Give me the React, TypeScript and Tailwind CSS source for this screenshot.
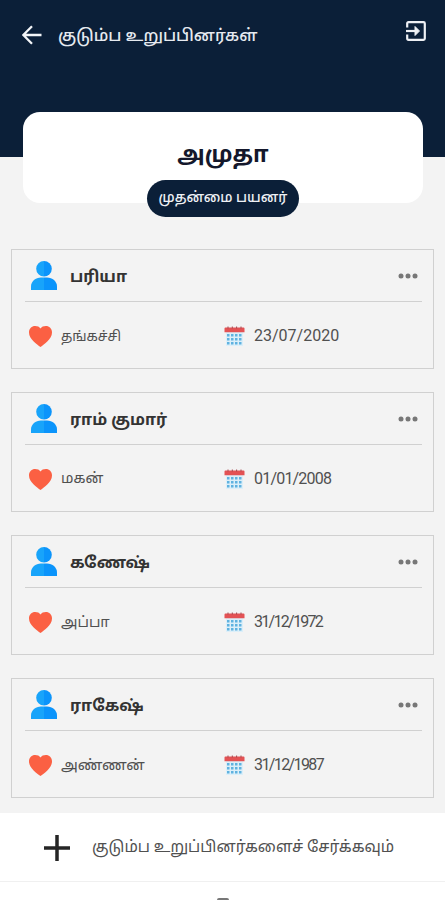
import React from 'react';

const members = [
  { id: 1, name: 'பரியா', relation: 'தங்கச்சி', relationClass: 'text-[13.7px]', dob: '23/07/2020', dobClass: 'tracking-[0px]' },
  { id: 2, name: 'ராம் குமார்', relation: 'மகன்', relationClass: 'text-[14.5px]', dob: '01/01/2008', dobClass: 'tracking-[-0.8px]' },
  { id: 3, name: 'கணேஷ்', relation: 'அப்பா', relationClass: 'text-[14.7px]', dob: '31/12/1972', dobClass: 'tracking-[-1.7px]' },
  { id: 4, name: 'ராகேஷ்', relation: 'அண்ணன்', relationClass: 'text-[15px]', dob: '31/12/1987', dobClass: 'tracking-[-1.6px]' },
];

function PersonIcon() {
  return (
    <svg width="26" height="29" viewBox="0 0 26 29" className="shrink-0">
      <path d="M13 0a7.800 7.800 0 0 0 0 15.600z" fill="#18a4fa" />
      <path d="M13 0a7.800 7.800 0 0 1 0 15.600z" fill="#0b94fb" />
      <path d="M0 29v-3.500c0-5 4.500-8.900 10-8.900h3v12.400z" fill="#18a4fa" />
      <path d="M26 29v-3.500c0-5-4.500-8.900-10-8.900h-3v12.400z" fill="#0b94fb" />
    </svg>
  );
}

function HeartIcon() {
  return (
    <svg width="23" height="21" viewBox="0 0 23 21" className="shrink-0">
      <path d="M11.500 21C8 18.500 0 13 0 6.500C0 2.500 2.800 0 6.100 0C8.500 0 10.500 .8 11.500 2.500C12.500 .8 14.500 0 16.900 0C20.200 0 23 2.500 23 6.500C23 13 15 18.500 11.500 21Z" fill="#fb6043" />
    </svg>
  );
}

function CalendarIcon() {
  const cols = [3, 7, 11, 15];
  const rows = [8, 12, 16];
  return (
    <svg width="21" height="21" viewBox="0 0 21 21" className="shrink-0">
      <path d="M2 6h17v14H2z" fill="#dceff9" />
      <path d="M1.500 1.500h18a1 1 0 0 1 1 1V6.300H.500V2.500a1 1 0 0 1 1-1z" fill="#e35254" />
      <path d="M4 .5v2M8.300 .5v2M12.600 .5v2M17 .5v2" stroke="#a34a50" strokeWidth="1" />
      {rows.map((y) => cols.map((x) => (
        <rect key={`${x}-${y}`} x={x} y={y} width="2.500" height="2.500" fill="#5fb2e0" />
      )))}
    </svg>
  );
}

export default function App() {
  return (
    <div className="w-[445px] h-[900px] overflow-hidden flex flex-col bg-[#f3f3f3] font-['Roboto','Noto_Sans_Tamil','Noto_Sans',sans-serif]">
      <header className="h-[157px] shrink-0 bg-[#0b1f38] flex flex-col">
        <div className="h-[70px] pl-[22px] pr-[19px] flex items-center">
          <svg width="20" height="20" viewBox="0 0 20 20" className="shrink-0" fill="none" stroke="#f3f5f8" strokeWidth="2.300">
            <path d="M19.500 10H1.500M10 1.200L1.300 10L10 18.800" />
          </svg>
          <h1 className="ml-[16px] mt-[2px] text-[16.6px] leading-[28px] font-medium text-[#e6eaf0] whitespace-nowrap">குடும்ப உறுப்பினர்கள்</h1>
          <svg width="20" height="20" viewBox="0 0 20 20" className="ml-auto mb-[9px] shrink-0" fill="none" stroke="#eef0f4" strokeWidth="2.200">
            <path d="M1.200 6.500V2.500Q1.200 1.200 2.500 1.200h15Q18.800 1.200 18.800 2.500v15Q18.800 18.800 17.500 18.800h-15Q1.200 18.800 1.200 17.500v-4" />
            <path d="M0 10h12" />
            <path d="M9 5.500L13.500 10L9 14.500z" fill="#eef0f4" strokeWidth="1" />
          </svg>
        </div>
      </header>

      {/* Primary user card overlaps the bottom of the header */}
      <section className="relative -mt-[45px] ml-[23px] w-[400px] h-[91px] shrink-0 rounded-[17px] bg-white flex justify-center">
        <h2 className="mt-[26px] text-[22.5px] leading-[32px] font-bold text-[#14182c]">அமுதா</h2>
        <div className="absolute left-[124px] top-[68px] w-[152px] h-[37px] rounded-full bg-[#0b1f38] flex items-center justify-center pb-[3px]">
          <span className="text-[13.9px] leading-[24px] font-medium text-[#eef1f5] whitespace-nowrap">முதன்மை பயனர்</span>
        </div>
      </section>

      <main className="mt-[46px] pl-[11px] pr-[11px] flex flex-col gap-[23px] flex-1 min-h-0">
        {members.map((member) => (
          <article key={member.id} className="h-[120px] shrink-0 border border-[#d0d0d0] pl-[13px] pr-[11px]">
            <div className="h-[52px] border-b border-[#d0d0d0] flex items-center pl-[6px] pr-[4px]">
              <PersonIcon />
              <h3 className="ml-[13px] mt-[3px] text-[16px] leading-[26px] font-bold text-[#333] whitespace-nowrap">{member.name}</h3>
              <svg width="20" height="6" viewBox="0 0 20 6" className="ml-auto" fill="#777">
                <circle cx="3" cy="3" r="2.500" />
                <circle cx="10" cy="3" r="2.500" />
                <circle cx="17" cy="3" r="2.500" />
              </svg>
            </div>
            <div className="h-[68px] flex items-center pl-[4px]">
              <div className="w-[195px] flex items-center gap-[9px]">
                <HeartIcon />
                <span className={`leading-[24px] text-[#505050] whitespace-nowrap ${member.relationClass}`}>{member.relation}</span>
              </div>
              <div className="flex items-center gap-[9px]">
                <CalendarIcon />
                <span className={`text-[16px] leading-[24px] text-[#505050] ${member.dobClass}`}>{member.dob}</span>
              </div>
            </div>
          </article>
        ))}
      </main>

      <footer className="h-[87px] shrink-0 bg-white flex flex-col">
        <div className="h-[69px] shrink-0 flex items-center pl-[44px] border-b border-[#f0f0f0]">
          <svg width="26" height="26" viewBox="0 0 26 26" className="mt-[2px] shrink-0" stroke="#252525" strokeWidth="3.500">
            <path d="M13 0v26M0 13h26" />
          </svg>
          <span className="ml-[22px] text-[15.6px] leading-[26px] text-[#505050] whitespace-nowrap">குடும்ப உறுப்பினர்களைச் சேர்க்கவும்</span>
        </div>
        <div className="flex-1 flex justify-center items-end overflow-hidden">
          <span className="w-[12px] h-[2px] rounded-t-full bg-[#777]" />
        </div>
      </footer>
    </div>
  );
}
